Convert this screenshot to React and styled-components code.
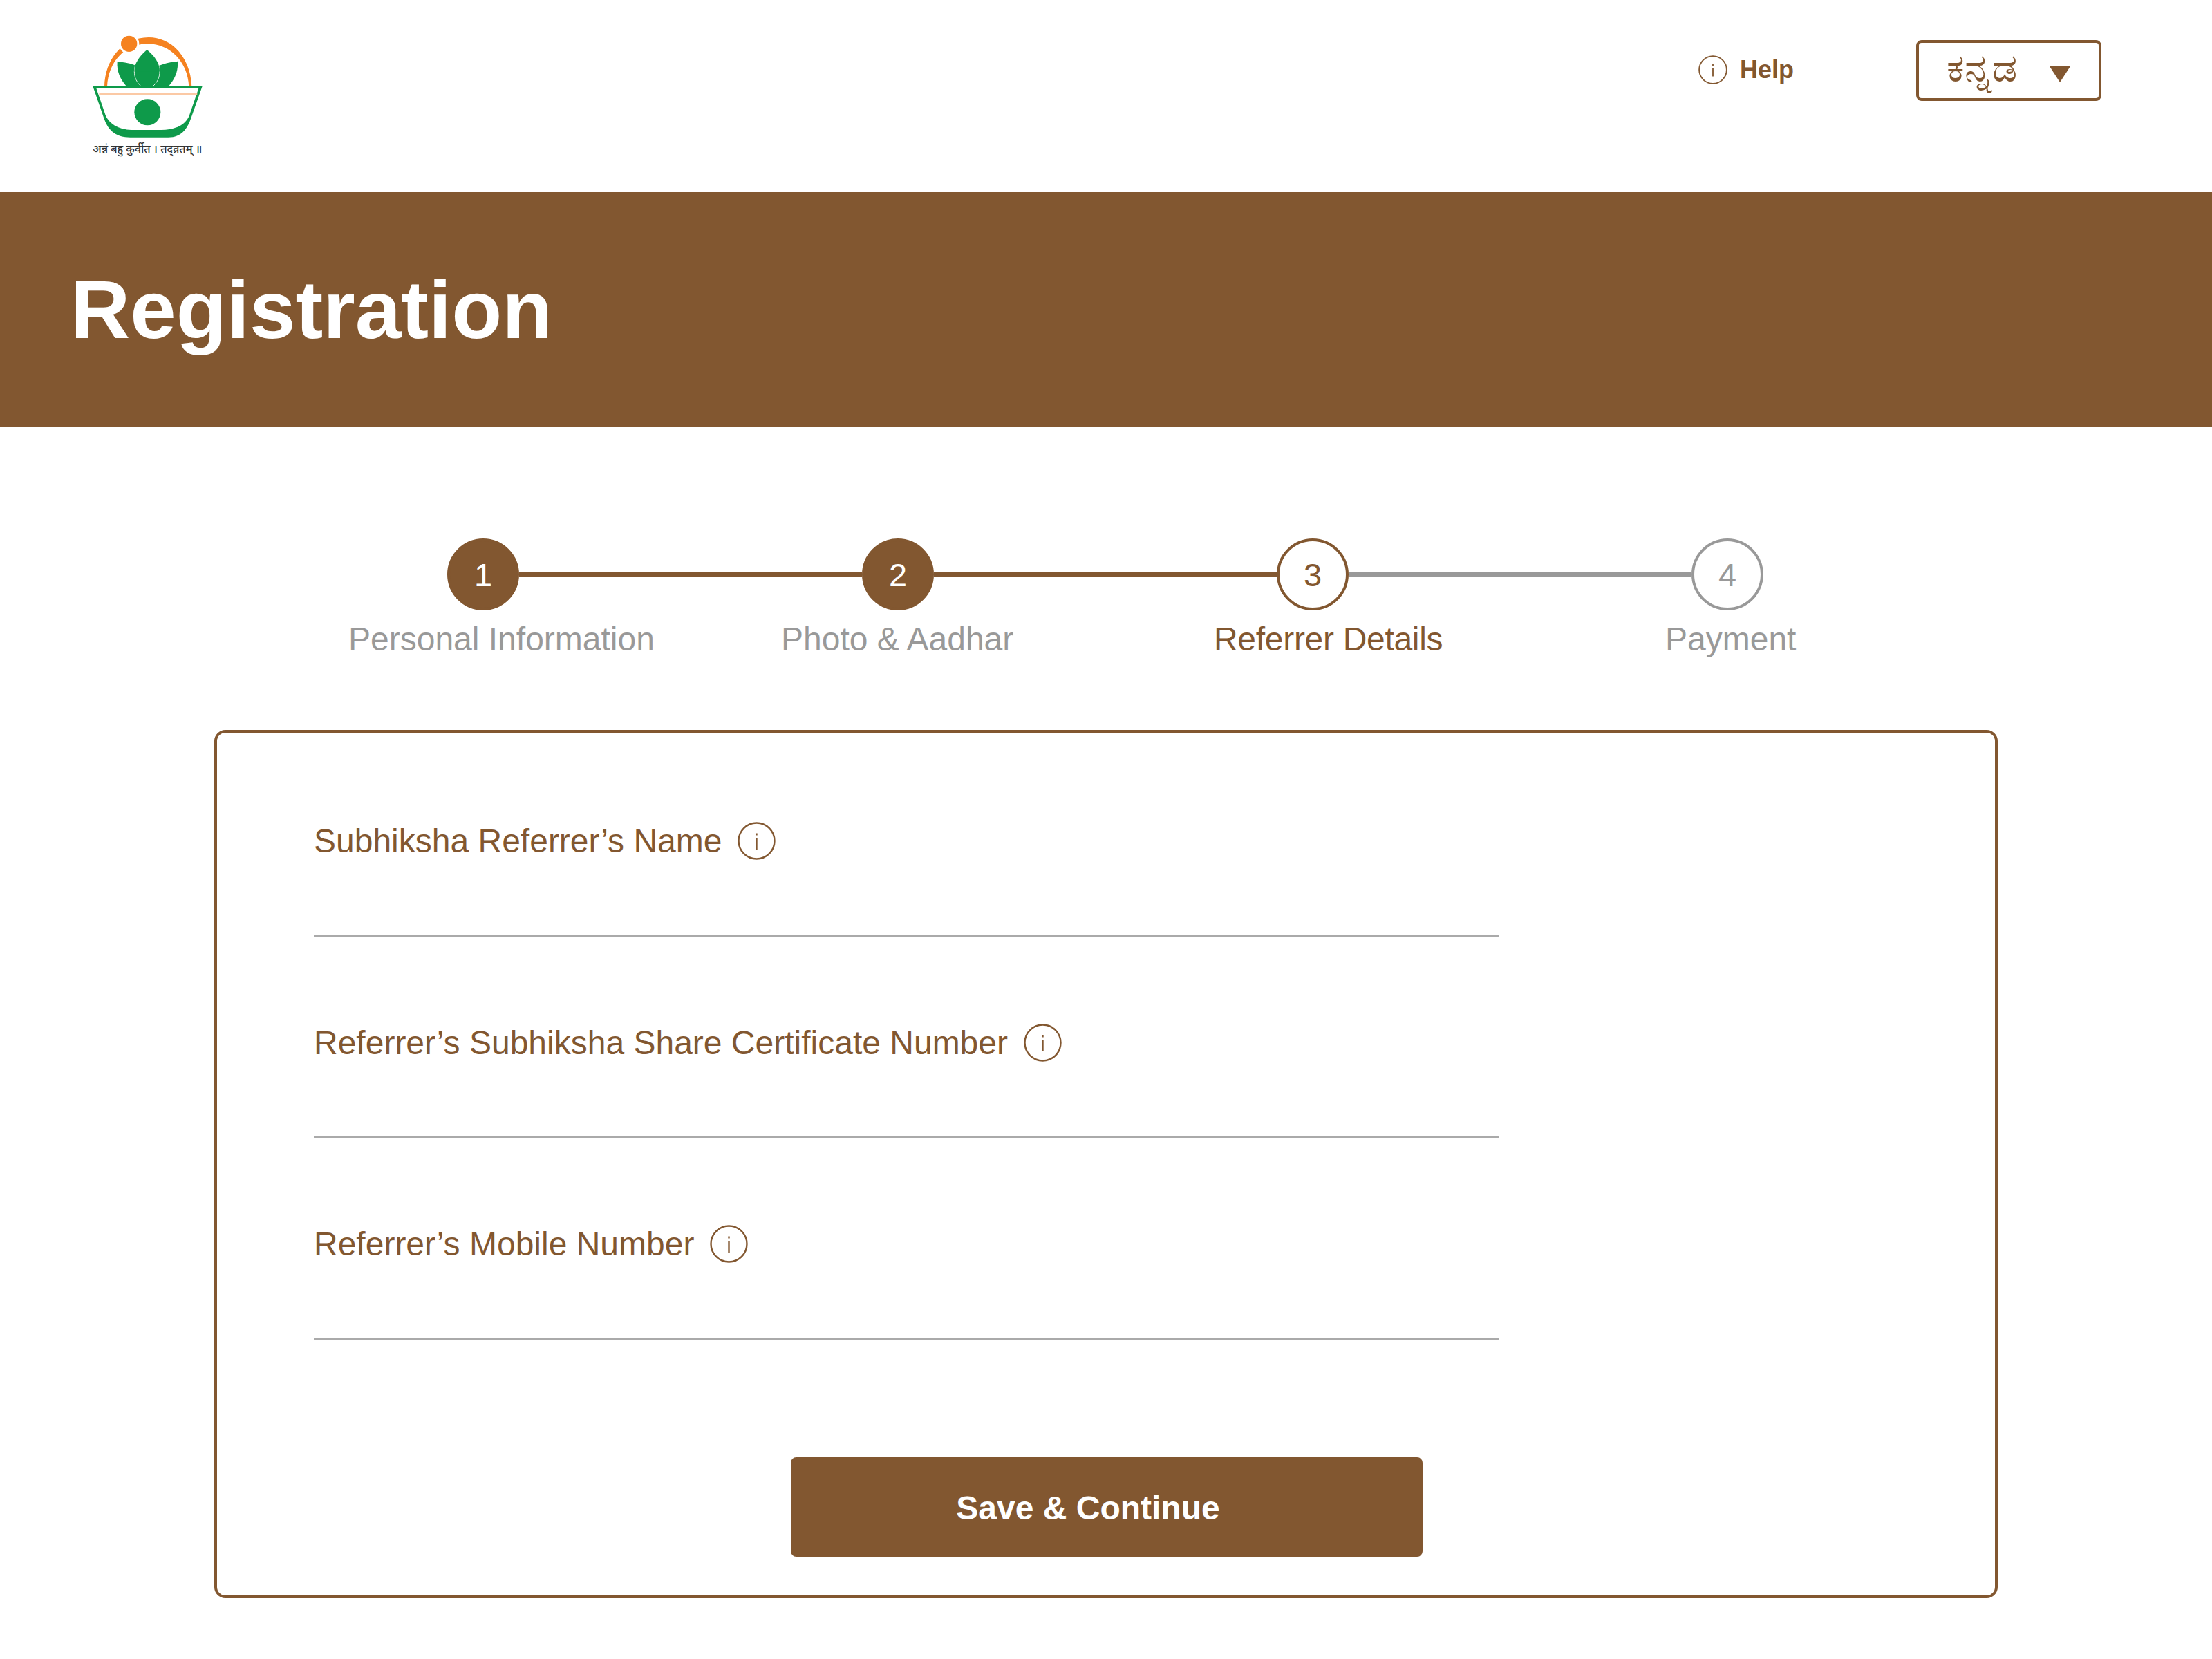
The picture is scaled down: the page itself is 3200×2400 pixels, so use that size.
import React from "react";
import styled, { createGlobalStyle } from "styled-components";

const BROWN = "#825730";
const GREY = "#999999";

const Global = createGlobalStyle`
  html, body { margin: 0; padding: 0; background: #fff; }
  body { font-family: "Liberation Sans", Arial, sans-serif; }
`;

const Page = styled.div`
  width: 3200px;
  min-height: 2400px;
  background: #fff;
`;

const Header = styled.header`
  height: 278px;
  box-sizing: border-box;
  padding: 30px 160px 0 100px;
  display: flex;
  align-items: flex-start;
`;

const LogoBlock = styled.div`
  width: 240px;
  height: 210px;
  position: relative;
`;

const LogoMark = styled.svg`
  display: block;
  width: 240px;
  height: 210px;
`;

const LogoMotto = styled.span`
  position: absolute;
  left: 34px;
  top: 172px;
  width: 160px;
  white-space: nowrap;
  font-size: 16px;
  line-height: 26px;
  font-weight: 500;
  color: #333;
  font-family: "Noto Sans", "DejaVu Sans", sans-serif;
`;

const HeaderActions = styled.div`
  margin-left: auto;
  display: flex;
  align-items: center;
  margin-top: 28px;
`;

const HelpLink = styled.a`
  display: flex;
  align-items: center;
  gap: 18px;
  margin-right: 177px;
  padding-bottom: 2px;
  font-size: 36px;
  font-weight: 700;
  color: ${BROWN};
`;

const LangSelect = styled.div`
  width: 268px;
  height: 88px;
  box-sizing: border-box;
  border: 4px solid ${BROWN};
  border-radius: 8px;
  display: flex;
  align-items: center;
  padding-left: 40px;
  color: ${BROWN};
  font-size: 57px;
`;

const LangName = styled.span`
  width: 149px;
  margin-top: -8px;
`;

const Caret = styled.span`
  width: 0;
  height: 0;
  border-left: 15px solid transparent;
  border-right: 15px solid transparent;
  border-top: 23px solid ${BROWN};
  margin-top: 10px;
`;

const Banner = styled.div`
  height: 340px;
  background: ${BROWN};
  display: flex;
  align-items: center;
  padding-left: 102px;
`;

const Title = styled.h1`
  margin: 0;
  color: #fff;
  font-size: 119.5px;
  font-weight: 700;
  line-height: 1;
`;

const Stepper = styled.section`
  padding-top: 161px;
`;

const Track = styled.div`
  display: flex;
  align-items: center;
  width: 1904px;
  margin-left: 647px;
`;

const Circle = styled.div`
  width: 104px;
  height: 104px;
  flex: none;
  box-sizing: border-box;
  border-radius: 50%;
  border: 4px solid ${(p) => (p.$state === "todo" ? GREY : BROWN)};
  background: ${(p) => (p.$state === "done" ? BROWN : "#fff")};
  color: ${(p) => (p.$state === "done" ? "#fff" : p.$state === "todo" ? GREY : BROWN)};
  display: flex;
  align-items: center;
  justify-content: center;
  font-size: 47px;
`;

const Connector = styled.div`
  flex: 1;
  height: 6px;
  background: ${(p) => (p.$on ? BROWN : GREY)};
`;

const Labels = styled.div`
  display: flex;
  margin: 14px 0 0 504px;
`;

const StepLabel = styled.div`
  width: ${(p) => p.$w}px;
  flex: none;
  font-size: 48px;
  line-height: 56px;
  white-space: nowrap;
  letter-spacing: ${(p) => (p.$active ? "-0.3px" : "0")};
  color: ${(p) => (p.$active ? BROWN : GREY)};
`;

const Card = styled.form`
  box-sizing: border-box;
  width: 2580px;
  height: 1256px;
  margin: 103px 0 0 310px;
  border: 4px solid ${BROWN};
  border-radius: 16px;
  padding: 129px 0 0 140px;
`;

const Field = styled.div`
  width: 1714px;
  margin-bottom: 125.5px;
  border-bottom: 3px solid #aaaaaa;
  height: 163px;
`;

const FieldLabel = styled.label`
  display: flex;
  align-items: center;
  gap: 23px;
  height: 55px;
  font-size: 48px;
  color: ${BROWN};
`;

const Actions = styled.div`
  display: flex;
  justify-content: center;
  padding-top: 44px;
  width: 2294px;
`;

const SaveButton = styled.button`
  width: 914px;
  height: 144px;
  border: 0;
  border-radius: 8px;
  background: ${BROWN};
  color: #fff;
  font-family: inherit;
  font-size: 48px;
  font-weight: 700;
  padding: 4px 54px 0 0;
`;

const InfoSvg = styled.svg`
  display: block;
  flex: none;
  width: ${(p) => p.$size}px;
  height: ${(p) => p.$size}px;
`;

function InfoIcon({ size = 55 }) {
  return (
    <InfoSvg $size={size} viewBox="0 0 55 55" fill="none" stroke={BROWN} strokeWidth="2.4">
      <circle cx="27.5" cy="27.5" r="26" />
      <path d="M27.5 23.5V40" />
      <path d="M27.5 16.5v3" />
    </InfoSvg>
  );
}

function Logo() {
  return (
    <LogoBlock>
      <LogoMark viewBox="0 0 720 630">
        <path d="M153 286C155 170 230 72 345 72C455 72 528 170 532 286H520C515 180 440 100 340 100C245 100 170 175 165 286Z" fill="#F58220" />
        <circle cx="260" cy="100" r="44" fill="#fff" />
        <circle cx="260" cy="100" r="35" fill="#F58220" />
        <path d="M209 178C240 180 268 184 300 200L340 286H250C222 255 206 220 209 178Z" fill="#0E9A4A" />
        <path d="M471 176C440 180 412 184 380 200L340 286H430C458 255 474 220 471 176Z" fill="#0E9A4A" />
        <path d="M338 126C372 155 393 185 393 220C393 248 382 268 362 286H314C294 268 283 248 283 220C283 185 305 155 338 126Z" fill="#0E9A4A" stroke="#DDEFE2" strokeWidth="3" />
        <path d="M338 126C372 155 393 185 393 220H283C283 185 305 155 338 126Z" fill="#0E9A4A" />
        <path d="M103 284H578L530 420C510 480 480 506 430 506H265C205 506 170 480 150 420Z" fill="#0E9A4A" />
        <path d="M118 293H562L522 410C505 455 455 474 400 474H280C225 474 178 455 158 410Z" fill="#fff" />
        <path d="M130 318H556" stroke="#FBC9A5" strokeWidth="8" />
        <circle cx="340" cy="397" r="57" fill="#0E9A4A" />
      </LogoMark>
      <LogoMotto>अन्नं बहु कुर्वीत । तद्व्रतम् ॥</LogoMotto>
    </LogoBlock>
  );
}

const steps = [
  { n: 1, label: "Personal Information", state: "done", w: 626 },
  { n: 2, label: "Photo & Aadhar", state: "done", w: 626 },
  { n: 3, label: "Referrer Details", state: "current", w: 653 },
  { n: 4, label: "Payment", state: "todo", w: 200 },
];

const fields = [
  "Subhiksha Referrer’s Name",
  "Referrer’s Subhiksha Share Certificate Number",
  "Referrer’s Mobile Number",
];

export default function App() {
  return (
    <Page>
      <Global />
      <Header>
        <Logo />
        <HeaderActions>
          <HelpLink>
            <InfoIcon size={42} />
            Help
          </HelpLink>
          <LangSelect>
            <LangName>ಕನ್ನಡ</LangName>
            <Caret />
          </LangSelect>
        </HeaderActions>
      </Header>
      <Banner>
        <Title>Registration</Title>
      </Banner>
      <Stepper>
        <Track>
          {steps.map((s, i) => (
            <React.Fragment key={s.n}>
              <Circle $state={s.state}>{s.n}</Circle>
              {i < steps.length - 1 && <Connector $on={s.state === "done"} />}
            </React.Fragment>
          ))}
        </Track>
        <Labels>
          {steps.map((s) => (
            <StepLabel key={s.n} $w={s.w} $active={s.state === "current"}>
              {s.label}
            </StepLabel>
          ))}
        </Labels>
      </Stepper>
      <Card>
        {fields.map((f) => (
          <Field key={f}>
            <FieldLabel>
              {f}
              <InfoIcon />
            </FieldLabel>
          </Field>
        ))}
        <Actions>
          <SaveButton type="button">Save &amp; Continue</SaveButton>
        </Actions>
      </Card>
    </Page>
  );
}
